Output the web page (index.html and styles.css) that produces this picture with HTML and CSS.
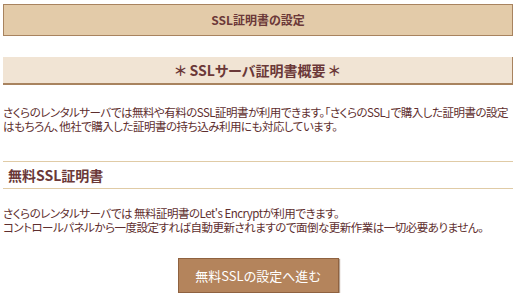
FILE: index.html
```html
<!DOCTYPE html>
<html lang="ja">
<head>
<meta charset="utf-8">
<title>SSL証明書の設定</title>
<link rel="stylesheet" href="styles.css">
</head>
<body>
<div class="page">
  <h1 class="page-title">SSL証明書の設定</h1>
  <h2 class="box-title">＊ SSLサーバ証明書概要 ＊</h2>
  <p class="text intro">さくらのレンタルサーバでは無料や有料のSSL証明書が利用できます。「さくらのSSL」で購入した証明書の設定はもちろん、他社で購入した証明書の持ち込み利用にも対応しています。</p>
  <h3 class="section-title">無料SSL証明書</h3>
  <p class="text detail">さくらのレンタルサーバでは 無料証明書のLet's Encryptが利用できます。
コントロールパネルから一度設定すれば自動更新されますので面倒な更新作業は一切必要ありません。</p>
  <div class="actions">
    <button class="btn" type="button">無料SSLの設定へ進む</button>
  </div>
</div>
</body>
</html>
```

FILE: styles.css
```css
html, body {
  margin: 0;
  padding: 0;
  background: #ffffff;
}
body {
  font-family: "Noto Sans CJK JP", "Noto Sans", sans-serif;
  font-feature-settings: "palt";
  color: #5e2e2e;
}
.page {
  padding: 4px 3px 0 3px;
  display: flex;
  flex-direction: column;
}
.page-title {
  margin: 0;
  height: 30px;
  line-height: 30px;
  background: #e3cba9;
  border: 1px solid #a8835f;
  text-align: center;
  font-size: 12px;
  font-weight: bold;
  color: #6b3838;
}
.box-title {
  margin: 21px 0 0 0;
  height: 26px;
  line-height: 26px;
  background: #f1e4d4;
  border-right: 1px solid #a8835f;
  border-bottom: 2px solid #a8835f;
  text-align: center;
  font-size: 14px;
  font-weight: bold;
  color: #6b3838;
}
.text {
  margin: 0;
  font-size: 11.5px;
  line-height: 14px;
  letter-spacing: -0.5px;
}
.intro {
  margin-top: 20px;
}
.section-title {
  margin: 28px 0 0 0;
  height: 26px;
  line-height: 26px;
  padding-left: 5px;
  border-top: 1px solid #e0cba6;
  border-bottom: 1px solid #e0cba6;
  font-size: 14px;
  font-weight: bold;
  color: #6b3838;
}
.detail {
  margin-top: 17px;
  white-space: pre-line;
}
.actions {
  display: flex;
  justify-content: center;
  margin-top: 24px;
}
.btn {
  width: 161px;
  height: 35px;
  background: #b4845c;
  border: 1px solid #8f6240;
  box-shadow: 1px 1px 1px rgba(90, 50, 20, 0.45);
  color: #ffffff;
  font-family: "Noto Sans CJK JP", "Noto Sans", sans-serif;
  font-feature-settings: "palt";
  font-size: 13px;
  padding: 0;
}
```
